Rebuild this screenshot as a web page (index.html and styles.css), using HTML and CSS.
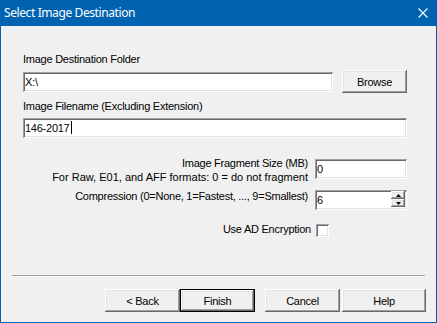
FILE: index.html
```html
<!DOCTYPE html>
<html>
<head>
<meta charset="utf-8">
<link rel="stylesheet" href="styles.css">
</head>
<body>
<div class="window">
  <div class="titlebar">
    <span class="title">Select Image Destination</span>
    <svg class="close" width="10" height="10" viewBox="0 0 10 10"><path d="M0.5 0.5 L9.5 9.5 M9.5 0.5 L0.5 9.5" stroke="#fff" stroke-width="1.1" fill="none"/></svg>
  </div>
  <div class="body">
    <div class="form">
      <div class="label">Image Destination Folder</div>
      <div class="row-folder">
        <div class="textbox folder">X:\</div>
        <div class="button browse">Browse</div>
      </div>
      <div class="label label-2">Image Filename (Excluding Extension)</div>
      <div class="textbox filename">146-2017<span class="caret"></span></div>
      <div class="options">
        <div class="opt-label opt-frag">Image Fragment Size (MB)<br><span class="wide">For Raw, E01, and AFF formats: 0 = do not fragment</span></div>
        <div class="textbox small frag">0</div>
        <div class="opt-label opt-comp">Compression (0=None, 1=Fastest, ..., 9=Smallest)</div>
        <div class="textbox small spin">
          <span class="val">6</span>
          <span class="spinner">
            <span class="sbtn"><svg width="5" height="3" viewBox="0 0 5 3"><path d="M2.5 0 L5 3 L0 3 Z" fill="#000"/></svg></span>
            <span class="sbtn"><svg width="5" height="3" viewBox="0 0 5 3"><path d="M0 0 L5 0 L2.5 3 Z" fill="#000"/></svg></span>
          </span>
        </div>
        <div class="opt-label opt-enc">Use AD Encryption</div>
        <div class="check-cell"><span class="checkbox"></span></div>
      </div>
    </div>
    <div class="footer">
      <div class="separator"></div>
      <div class="buttons">
        <div class="button">&lt; Back</div>
        <div class="button default">Finish</div>
        <div class="button cancel">Cancel</div>
        <div class="button help">Help</div>
      </div>
    </div>
  </div>
</div>
</body>
</html>
```

FILE: styles.css
```css
html, body {
  margin: 0;
  padding: 0;
  background: #f0f0f0;
}

.window {
  width: 437px;
  height: 323px;
  box-sizing: border-box;
  border: 1px solid #0063b1;
  border-top: 0;
  background: #f0f0f0;
  display: flex;
  flex-direction: column;
  font-family: "Liberation Sans", Arial, sans-serif;
  font-size: 11px;
  letter-spacing: -0.25px;
  color: #000;
}

.titlebar {
  height: 26px;
  flex: none;
  background: #0063b1;
  display: flex;
  align-items: center;
  justify-content: space-between;
  padding: 0 9px 0 4px;
  margin: 0 -1px;
}

.title {
  color: #fff;
  font-family: "Noto Sans", "Open Sans", sans-serif;
  font-size: 12px;
  letter-spacing: -0.4px;
  line-height: 16px;
}

.close {
  display: block;
}

.body {
  flex: 1;
  display: flex;
  flex-direction: column;
  justify-content: space-between;
}

.form {
  padding: 26px 29px 0 22px;
  display: flex;
  flex-direction: column;
}

.label {
  line-height: 14px;
  height: 14px;
}

.row-folder {
  margin-top: 4px;
  display: flex;
  align-items: flex-start;
  gap: 9px;
}

.textbox {
  background: #fff;
  height: 20px;
  box-sizing: border-box;
  padding: 3px 2px 0 2px;
  line-height: 14px;
  box-shadow: inset 1px 1px #a0a0a0, inset -1px -1px #fff, inset 2px 2px #696969, inset -2px -2px #e3e3e3;
  display: flex;
  align-items: flex-start;
}

.folder {
  margin-top: 2px;
  width: 310px;
}

.button {
  height: 23px;
  width: 75px;
  box-sizing: border-box;
  background: #f0f0f0;
  display: flex;
  align-items: center;
  justify-content: center;
  line-height: 14px;
  box-shadow: inset -1px -1px #696969, inset 1px 1px #fff, inset -2px -2px #a0a0a0, inset 2px 2px #e3e3e3;
}

.browse {
  width: 65px;
}

.label-2 {
  margin-top: 6px;
}

.filename {
  margin-top: 5px;
}

.caret {
  display: inline-block;
  width: 1px;
  height: 13px;
  background: #000;
  margin-left: 1px;
  margin-top: 0;
}

.options {
  margin-top: 18px;
  display: grid;
  grid-template-columns: 1fr 92px;
  column-gap: 7px;
}

.opt-label {
  text-align: right;
  line-height: 14px;
}

.wide {
  letter-spacing: 0;
}

.frag {
  margin-top: 3px;
}

.opt-comp {
  margin-top: 5px;
}

.spin {
  margin-top: 6px;
  padding-right: 2px;
  justify-content: space-between;
}

.spinner {
  display: flex;
  flex-direction: column;
  width: 14px;
  margin-top: -2px;
}

.sbtn {
  height: 8px;
  box-sizing: border-box;
  display: flex;
  align-items: center;
  justify-content: center;
  background: #f0f0f0;
  box-shadow: inset -1px -1px #696969, inset 1px 1px #fff, inset -2px -2px #a0a0a0, inset 2px 2px #e3e3e3;
}

.sbtn svg {
  display: block;
}

.opt-enc {
  margin-top: 12px;
  margin-right: -3px;
}

.check-cell {
  margin-top: 14px;
}

.checkbox {
  display: block;
  width: 13px;
  height: 13px;
  margin-left: 1px;
  box-sizing: border-box;
  background: #fff;
  box-shadow: inset 1px 1px #a0a0a0, inset -1px -1px #fff, inset 2px 2px #696969, inset -2px -2px #e3e3e3;
}

.footer {
  padding: 0 10px 10px 11px;
}

.separator {
  height: 1px;
  background: #a0a0a0;
  border-bottom: 1px solid #fff;
  margin-right: 1px;
  margin-bottom: 12px;
}

.buttons {
  display: flex;
  justify-content: flex-end;
}

.default {
  box-shadow: inset 0 0 0 1px #000, inset -2px -2px #696969, inset 2px 2px #fff, inset -3px -3px #a0a0a0, inset 3px 3px #e3e3e3;
}

.cancel {
  margin-left: 10px;
}

.help {
  margin-left: 2px;
  width: 84px;
}
```
